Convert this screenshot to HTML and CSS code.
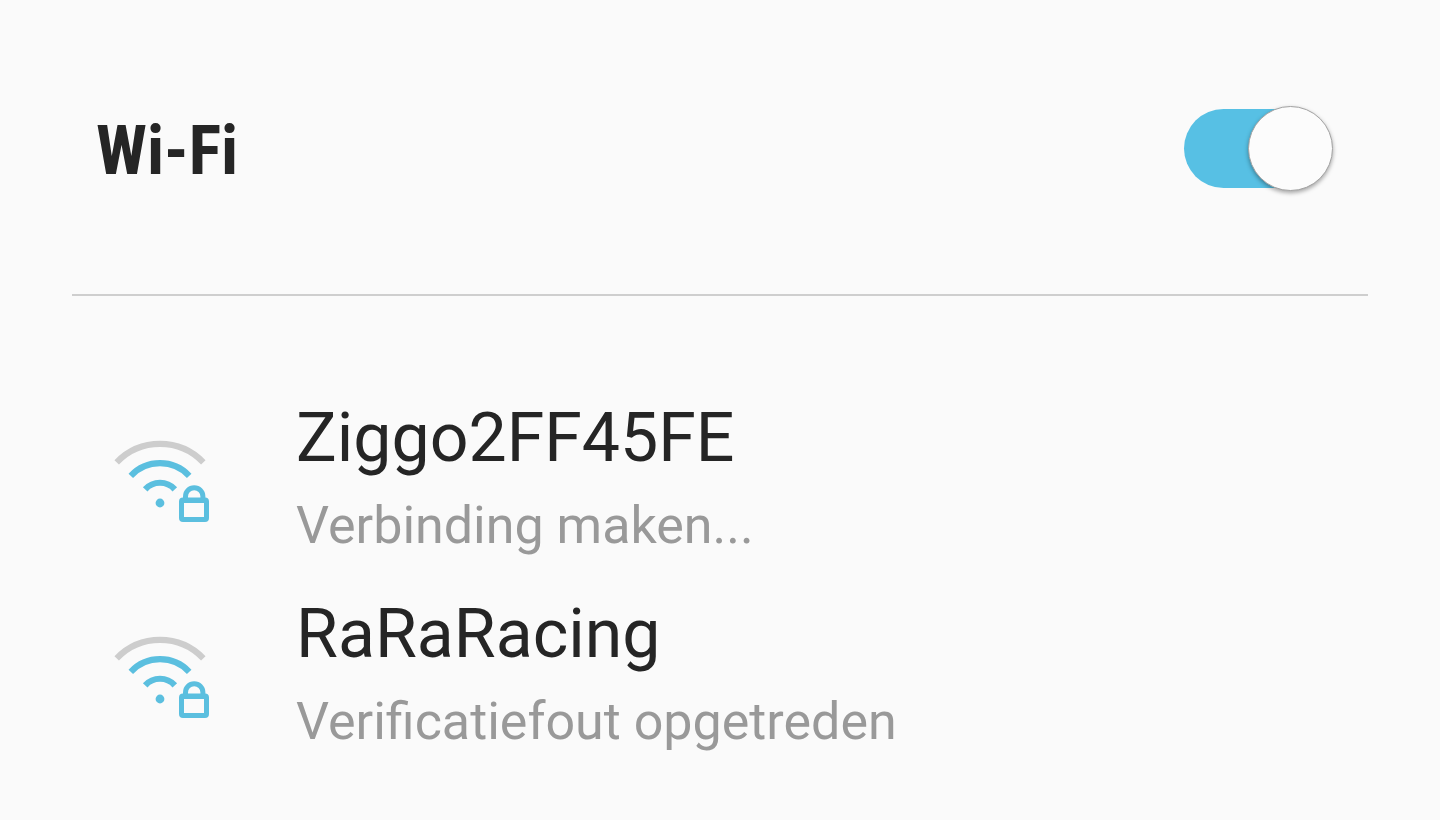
FILE: index.html
```html
<!DOCTYPE html>
<html lang="nl">
<head>
    <meta charset="UTF-8">
    <meta name="viewport" content="width=device-width, initial-scale=1.0">
    <title>Wi-Fi</title>
    <link rel="stylesheet" href="styles.css">
</head>
<body>
    <!-- Shared network icon -->
    <svg class="icon-defs" aria-hidden="true">
        <symbol id="wifi-lock" viewBox="0 0 96 94">
            <g fill="none" stroke="#5bbfdf" stroke-width="6.2">
                <path stroke="#cdcdcd" d="M2.7 33.3A60 60 0 0 1 89.3 33.3"/>
                <path d="M16.8 46.8A40 40 0 0 1 75.2 46.8"/>
                <path d="M31.2 60.3A20 20 0 0 1 60.8 60.3"/>
                <path stroke-width="5" d="M71.5 71V67.5a8.7 8.7 0 0 1 17.4 0V71"/>
            </g>
            <circle cx="46" cy="74" r="4.4" fill="#5bbfdf"/>
            <path fill="#5bbfdf" fill-rule="evenodd" d="M69 68.6h22a4 4 0 0 1 4 4v16.4a4 4 0 0 1-4 4H69a4 4 0 0 1-4-4V72.6a4 4 0 0 1 4-4zM70 74v14h20V74z"/>
        </symbol>
    </svg>

    <main class="settings">
        <header class="header">
            <h1 class="title"><label for="wifi">Wi-Fi</label></h1>
            <input class="switch" type="checkbox" role="switch" id="wifi" checked>
        </header>

        <ul class="networks">
            <li class="network">
                <svg class="network-icon" aria-hidden="true"><use href="#wifi-lock"/></svg>
                <div class="network-text">
                    <h2 class="network-name">Ziggo2FF45FE</h2>
                    <p class="network-status">Verbinding maken...</p>
                </div>
            </li>
            <li class="network">
                <svg class="network-icon" aria-hidden="true"><use href="#wifi-lock"/></svg>
                <div class="network-text">
                    <h2 class="network-name">RaRaRacing</h2>
                    <p class="network-status">Verificatiefout opgetreden</p>
                </div>
            </li>
        </ul>
    </main>
</body>
</html>
```
FILE: styles.css
```css
*,
*::before {
    box-sizing: border-box;
}

body {
    margin: 0;
    background-color: #fafafa;
    color: #252525;
    font-family: Roboto, sans-serif;
}

.icon-defs {
    display: none;
}

.settings {
    padding: 0 72px;
}

/* Header with the main switch */
.header {
    display: flex;
    justify-content: space-between;
    align-items: center;
    padding: 109px 40px 101px 24px;
    border-bottom: 2px solid #cecece;
}

.title {
    margin: 0;
    font-family: "Roboto Condensed", Roboto, sans-serif;
    font-size: 68px;
    font-weight: bold;
    line-height: 84px;
}

.switch {
    appearance: none;
    position: relative;
    width: 144px;
    height: 79px;
    margin: 0 0 5px;
    border-radius: 40px;
    background-color: #bdbdbd;
    cursor: pointer;
}

.switch::before {
    content: "";
    position: absolute;
    top: -3px;
    left: -5px;
    width: 85px;
    height: 85px;
    border: 1px solid #a3a3a3;
    border-radius: 50%;
    background-color: #fcfcfc;
    box-shadow: 0 2px 4px rgba(0, 0, 0, 0.35);
}

.switch:checked {
    background-color: #57c0e4;
}

.switch:checked::before {
    left: auto;
    right: -5px;
}

/* Network list */
.networks {
    margin: 0;
    padding: 82px 0 0;
    list-style: none;
}

.network {
    display: flex;
    align-items: center;
    gap: 86px;
    padding: 18px 42px;
}

.network-icon {
    flex: none;
    width: 96px;
    height: 94px;
}

.network-text {
    display: flex;
    flex-direction: column;
    gap: 16px;
}

.network-name {
    margin: 0;
    font-size: 68px;
    font-weight: normal;
    line-height: 84px;
}

.network-status {
    margin: 0;
    color: #999;
    font-size: 52px;
    line-height: 60px;
}
```
